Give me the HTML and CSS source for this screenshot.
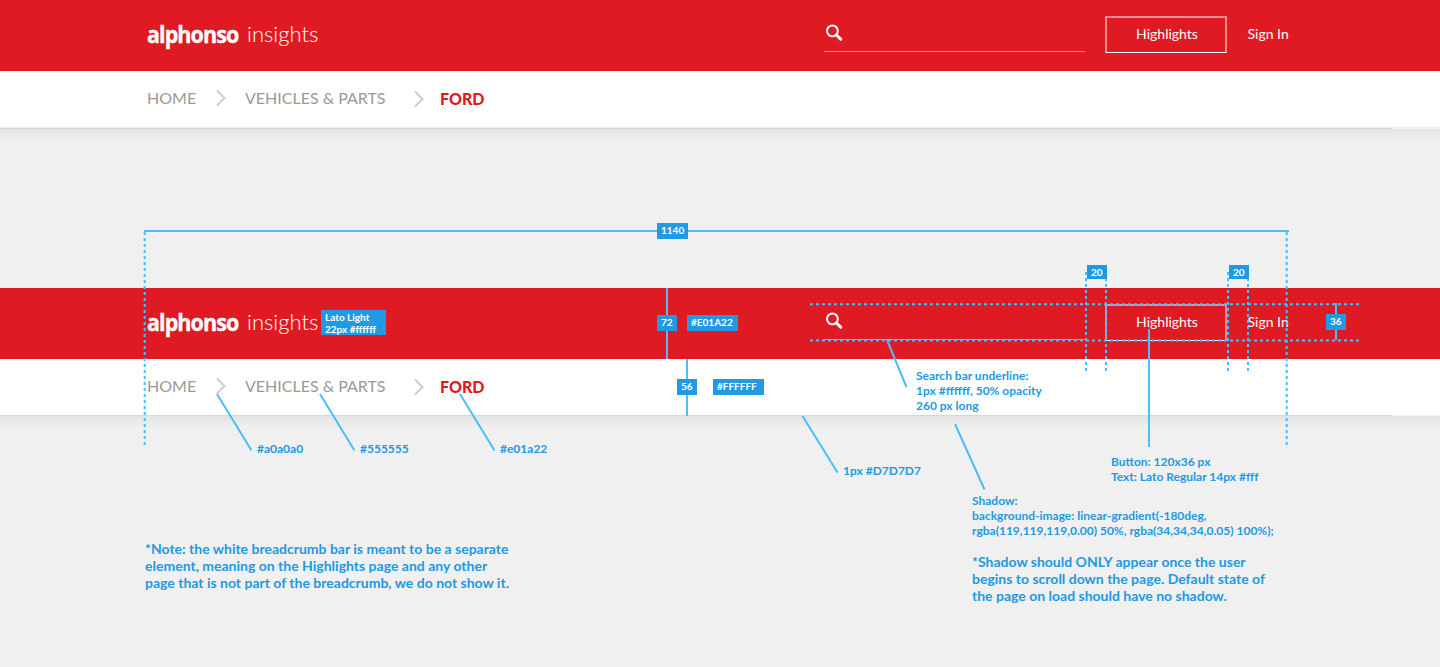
FILE: index.html
```html
<!DOCTYPE html>
<html lang="en">
<head>
<meta charset="utf-8">
<title>Alphonso Insights – header spec</title>
<link rel="stylesheet" href="styles.css">
</head>
<body>
<main class="sheet">
  <header class="site-header">
    <div class="topbar">
      <div class="brand">
        <span class="logo">alphonso</span>
        <span class="product">insights</span>
      </div>
      <div class="actions">
        <div class="search"><svg width="18" height="18" viewBox="0 0 18 18"><circle cx="7.4" cy="6.9" r="5.4" fill="none" stroke="#fff" stroke-width="2"/><path d="M11.4 11 15.7 15.1" stroke="#fff" stroke-width="3" stroke-linecap="round"/></svg></div>
        <a class="button">Highlights</a>
        <a class="signin">Sign In</a>
      </div>
    </div>
    <nav class="crumbs">
      <a class="home">HOME</a>
      <svg class="chev" width="12" height="18" viewBox="0 0 12 18"><path d="M1 1.500 8.500 9 1 16.500"/></svg>
      <a class="category">VEHICLES &amp; PARTS</a>
      <svg class="chev low" width="12" height="18" viewBox="0 0 12 18"><path d="M2 1.500 9.500 9 2 16.500"/></svg>
      <b class="current">FORD</b>
    </nav>
    <div class="rule soft"></div>
    <div class="shadow"></div>
  </header>

  <header class="site-header">
    <div class="topbar">
      <div class="brand">
        <span class="logo">alphonso</span>
        <span class="product">insights</span>
      </div>
      <div class="actions">
        <div class="search"><svg width="18" height="18" viewBox="0 0 18 18"><circle cx="7.4" cy="6.9" r="5.4" fill="none" stroke="#fff" stroke-width="2"/><path d="M11.4 11 15.7 15.1" stroke="#fff" stroke-width="3" stroke-linecap="round"/></svg></div>
        <a class="button">Highlights</a>
        <a class="signin">Sign In</a>
      </div>
    </div>
    <nav class="crumbs">
      <a class="home">HOME</a>
      <svg class="chev" width="12" height="18" viewBox="0 0 12 18"><path d="M1 1.500 8.500 9 1 16.500"/></svg>
      <a class="category">VEHICLES &amp; PARTS</a>
      <svg class="chev low" width="12" height="18" viewBox="0 0 12 18"><path d="M2 1.500 9.500 9 2 16.500"/></svg>
      <b class="current">FORD</b>
    </nav>
    <div class="rule"></div>
    <div class="shadow"></div>
  </header>

  <!-- Measurement guides and callout leaders -->
  <svg class="guides" width="1440" height="667" viewBox="0 0 1440 667">
    <g class="dashed">
      <path d="M144.7 232V445M1286.7 232V445M1086 272V371M1106 272V371M1228 272V371M1248 272V371"/>
      <path d="M810 304.3H1359M810 340.4H1359"/>
    </g>
    <path d="M144 231H1289M667 288V359M687 359V416M1336 303V340M1149 329V447"/>
    <path d="M217 394 251.500 450.500M320 394 354.500 450.500M460 394 494.500 450.500M802.500 416 837.500 472.500M887 340 906.500 387M955 424 984.500 489.500"/>
  </svg>

  <span class="tag t-width">1140</span>
  <span class="tag t-bar">72</span>
  <span class="tag t-red">#E01A22</span>
  <span class="tag t-crumb">56</span>
  <span class="tag t-white">#FFFFFF</span>
  <span class="tag t-gap1">20</span>
  <span class="tag t-gap2">20</span>
  <span class="tag t-button">36</span>
  <span class="tag t-font">Lato Light<br>22px #ffffff</span>

  <p class="callout c-sep">#a0a0a0</p>
  <p class="callout c-link">#555555</p>
  <p class="callout c-current">#e01a22</p>
  <p class="callout c-border">1px #D7D7D7</p>
  <p class="callout c-search">Search bar underline:<br>1px #ffffff, 50% opacity<br>260 px long</p>
  <p class="callout c-button">Button: 120x36 px<br>Text: Lato Regular 14px #fff</p>
  <p class="callout c-shadow">Shadow:<br>background-image: linear-gradient(-180deg,<br>rgba(119,119,119,0.00) 50%, rgba(34,34,34,0.05) 100%);</p>
  <p class="note n-crumbs">*Note: the white breadcrumb bar is meant to be a separate<br>element, meaning on the Highlights page and any other<br>page that is not part of the breadcrumb, we do not show it.</p>
  <p class="note n-shadow">*Shadow should ONLY appear once the user<br>begins to scroll down the page. Default state of<br>the page on load should have no shadow.</p>
</main>
</body>
</html>
```
FILE: styles.css
```css
* { box-sizing: border-box; }
body { margin: 0; background: #f0f0f0; font-family: Lato, "Liberation Sans", sans-serif; }
.sheet { position: relative; height: 667px; overflow: hidden; display: flex; flex-direction: column; gap: 148px; }

.site-header { height: 140px; }
.topbar { height: 71px; background: #e01a22; color: #fff; display: flex; justify-content: space-between; padding: 0 151px 0 147px; }
.brand { display: flex; padding-top: 19px; }
.logo { width: 93px; font: 700 23px/30px "Open Sans", "Noto Sans", sans-serif; letter-spacing: -1px; -webkit-text-stroke: .4px #fff; transform: scaleX(.935); transform-origin: 0 0; }
.product { font-size: 22px; font-weight: 300; line-height: 30px; margin-left: 7px; }
.actions { display: flex; font-size: 14px; padding-top: 16px; }
.search { width: 261px; height: 36px; padding: 8px 0 0 1px; border-bottom: 1px solid rgba(255,255,255,.5); }
.search svg { display: block; }
.button { width: 122px; height: 37px; margin-left: 20px; border: 2px solid rgba(255,255,255,.5); border-bottom: 1px solid #fff; text-align: center; line-height: 32px; padding-left: 2px; }
.signin { margin-left: 20px; width: 42px; white-space: nowrap; line-height: 36px; padding-left: .5px; }

.crumbs { height: 56px; background: #fff; display: flex; align-items: flex-start; padding: 17px 0 0 147px; font-size: 16px; line-height: 20px; color: #999; white-space: nowrap; }
.home { width: 69px; }
.chev { fill: none; stroke: #ccc; stroke-width: 2; margin-top: 1px; }
.low { margin-top: 2px; }
.category { width: 168px; margin-left: 17px; }
.current { margin-left: 15px; padding-top: 1px; font-weight: 900; color: #e01a22; }
.rule { height: 1px; background: linear-gradient(90deg, #d7d7d7 1392px, #f3f3f3 1392px); }
.soft { height: 2px; border-top: 1px solid #f0f0f0; }
.shadow { height: 12px; background: linear-gradient(rgba(34,34,34,.06), rgba(119,119,119,0)); }

.guides { position: absolute; inset: 0; fill: none; stroke: #4cbcfb; stroke-width: 2; }
.dashed { stroke-dasharray: 3 3; }

.tag { position: absolute; height: 16px; padding-left: 4px; background: #2199e3; color: #fff; font-size: 10px; font-weight: 700; line-height: 15px; white-space: nowrap; }
.t-width { left: 657px; top: 223px; width: 31px; }
.t-bar { left: 657px; top: 315px; width: 20px; }
.t-red { left: 687px; top: 315px; width: 51px; }
.t-crumb { left: 677px; top: 379px; width: 20px; }
.t-white { left: 713px; top: 379px; width: 51px; }
.t-gap1 { left: 1087px; top: 265px; width: 20px; height: 14px; }
.t-gap2 { left: 1229px; top: 265px; width: 20px; height: 14px; }
.t-button { left: 1326px; top: 314px; width: 20px; }
.t-font { left: 321px; top: 310px; width: 65px; height: 25px; padding-top: 1px; line-height: 12px; }

.callout, .note { position: absolute; margin: 0; color: #2199e3; white-space: nowrap; }
.callout { font-size: 12px; font-weight: 700; line-height: 15px; }
.note { font-size: 14px; font-weight: 700; line-height: 17px; }
.c-sep { left: 257px; top: 441px; }
.c-link { left: 360px; top: 441px; }
.c-current { left: 500px; top: 441px; }
.c-border { left: 843px; top: 463px; }
.c-search { left: 916px; top: 368px; }
.c-button { left: 1111px; top: 454px; }
.c-shadow { left: 972px; top: 493px; }
.n-crumbs { left: 145px; top: 540px; }
.n-shadow { left: 972px; top: 553px; }
```
